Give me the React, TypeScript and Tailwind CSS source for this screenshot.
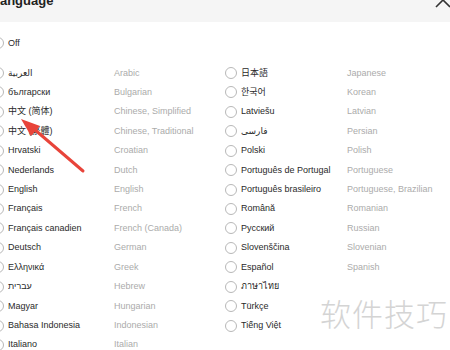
import React from 'react';

type Lang = { native: string; english: string };

const LEFT: Lang[] = [
  { native: 'العربية', english: 'Arabic' },
  { native: 'български', english: 'Bulgarian' },
  { native: '中文 (简体)', english: 'Chinese, Simplified' },
  { native: '中文 (繁體)', english: 'Chinese, Traditional' },
  { native: 'Hrvatski', english: 'Croatian' },
  { native: 'Nederlands', english: 'Dutch' },
  { native: 'English', english: 'English' },
  { native: 'Français', english: 'French' },
  { native: 'Français canadien', english: 'French (Canada)' },
  { native: 'Deutsch', english: 'German' },
  { native: 'Ελληνικά', english: 'Greek' },
  { native: 'עברית', english: 'Hebrew' },
  { native: 'Magyar', english: 'Hungarian' },
  { native: 'Bahasa Indonesia', english: 'Indonesian' },
  { native: 'Italiano', english: 'Italian' },
];

const RIGHT: Lang[] = [
  { native: '日本語', english: 'Japanese' },
  { native: '한국어', english: 'Korean' },
  { native: 'Latviešu', english: 'Latvian' },
  { native: 'فارسی', english: 'Persian' },
  { native: 'Polski', english: 'Polish' },
  { native: 'Português de Portugal', english: 'Portuguese' },
  { native: 'Português brasileiro', english: 'Portuguese, Brazilian' },
  { native: 'Română', english: 'Romanian' },
  { native: 'Русский', english: 'Russian' },
  { native: 'Slovenščina', english: 'Slovenian' },
  { native: 'Español', english: 'Spanish' },
  { native: 'ภาษาไทย', english: '' },
  { native: 'Türkçe', english: '' },
  { native: 'Tiếng Việt', english: '' },
];

const Radio = () => (
  <span className="w-[12px] h-[12px] rounded-full border border-[#b8b8b8] bg-white flex-shrink-0" />
);

const Option: React.FC<{ lang: Lang }> = ({ lang }) => (
  <div className="flex items-center h-[19.43px]">
    <Radio />
    <span className="ml-[4px] w-[106px] flex-shrink-0 text-[#2a2a2a] whitespace-nowrap">{lang.native}</span>
    <span className="text-[#ababab] whitespace-nowrap">{lang.english}</span>
  </div>
);

const App: React.FC = () => {
  return (
    <div
      className="relative w-[450px] h-[350px] overflow-hidden bg-white text-[9px] leading-none"
      style={{ fontFamily: '"Liberation Sans", "DejaVu Sans", "Noto Sans CJK SC", "Noto Sans CJK KR", sans-serif' }}
    >
      <header className="h-[22px] bg-[#f5f5f5] flex justify-between items-start">
        <h1 className="ml-[-8px] mt-[-6px] text-[13px] leading-[13px] font-bold text-[#222]">Language</h1>
        <svg className="w-[16px] h-[16px] mt-[-8px] mr-[-1px]" viewBox="0 0 16 16" fill="none" stroke="#333" strokeWidth="1.6">
          <path d="M1 1 L15 15 M15 1 L1 15" />
        </svg>
      </header>

      <div className="ml-[-8px] pt-[11.3px]">
        <Option lang={{ native: 'Off', english: '' }} />
        <div className="mt-[10.6px] grid grid-cols-[233px_233px]">
          {LEFT.map((l, i) => (
            <React.Fragment key={l.native}>
              <Option lang={l} />
              {RIGHT[i] ? <Option lang={RIGHT[i]} /> : <div />}
            </React.Fragment>
          ))}
        </div>
      </div>

      {/* red annotation arrow */}
      <svg className="absolute left-0 top-0 pointer-events-none" width="450" height="350" viewBox="0 0 450 350">
        <line x1="83" y1="171" x2="34" y2="129" stroke="#e8443a" strokeWidth="3" strokeLinecap="round" />
        <polygon points="21,119 40,126 31,136" fill="#e8443a" />
      </svg>

      {/* watermark */}
      <div
        className="absolute left-[320px] top-[297px] text-[31px] leading-none font-light text-[#d4d4d4] tracking-[1px]"
        style={{ fontFamily: '"Noto Sans CJK SC", sans-serif' }}
      >
        软件技巧
      </div>
    </div>
  );
};

export default App;
